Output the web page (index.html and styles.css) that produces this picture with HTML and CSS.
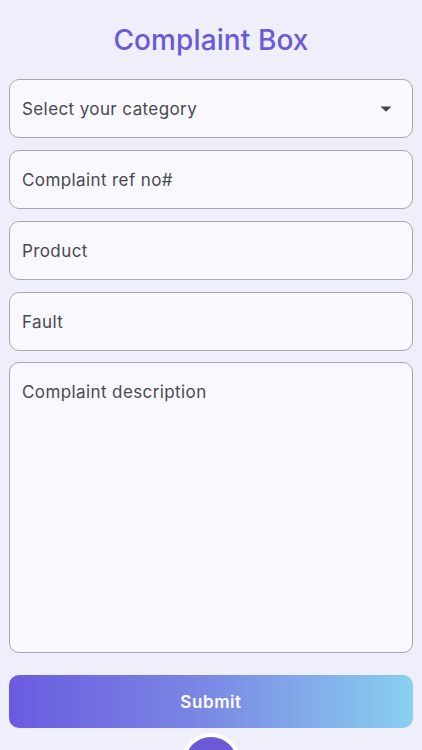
FILE: index.html
```html
<!DOCTYPE html>
<html lang="en">
<head>
    <meta charset="UTF-8">
    <title>Complaint Box</title>
    <link rel="stylesheet" href="styles.css">
</head>
<body>
<div class="page">
    <h1 class="title">Complaint Box</h1>
    <form class="form">
        <div class="field select">
            <span class="label">Select your category</span>
            <svg class="arrow" width="12" height="6" viewBox="0 0 12 6"><path d="M0.5 0.5 L11.5 0.5 L6 5.8 Z" fill="#45454b"/></svg>
        </div>
        <div class="field"><span class="label">Complaint ref no#</span></div>
        <div class="field"><span class="label">Product</span></div>
        <div class="field"><span class="label">Fault</span></div>
        <div class="field area"><span class="label">Complaint description</span></div>
        <div class="btn">Submit</div>
    </form>
    <div class="fab"></div>
</div>
</body>
</html>
```

FILE: styles.css
```css
*{
    margin:0;
    padding:0;
    box-sizing: border-box;
}

body{
    background-color: #efeefb;
    font-family: Inter, "Noto Sans", sans-serif;
    overflow: hidden;
    height:750px;
}

.page{
    height:750px;
    padding:0 9px;
    display: flex;
    flex-direction: column;
    overflow: hidden;
}

.title{
    height:79px;
    line-height: 80px;
    text-align: center;
    font-size: 28px;
    font-weight: 500;
    letter-spacing: 0.1px;
    color: #6a5ad7;
}

.form{
    display: flex;
    flex-direction: column;
    gap:12px;
}

.field{
    height:59px;
    border:1px solid #a8a7b0;
    border-radius: 10px;
    background-color: #f8f8fe;
    padding:0 20px 0 12px;
    display: flex;
    align-items: center;
    justify-content: space-between;
}
.label{
    font-size: 17px;
    color: #4a4950;
    line-height: 20px;
    letter-spacing: 0.4px;
}

.area{
    height:291px;
    margin-top:-1px;
    align-items: flex-start;
    padding-top:19px;
}

.btn{
    margin-top:10px;
    height:53px;
    border-radius: 10px;
    background: linear-gradient(90deg, #6a5ae0 0%, #7b8ae4 50%, #89d0f0 100%);
    color: #fff;
    font-size: 17px;
    font-weight: 600;
    letter-spacing: 0.6px;
    display: flex;
    align-items: center;
    justify-content: center;
}

.fab{
    margin:5px auto 0;
    width:60px;
    height:60px;
    border-radius: 50%;
    border:4px solid #fff;
    background-color: #6a5ad7;
    flex-shrink: 0;
}
```
